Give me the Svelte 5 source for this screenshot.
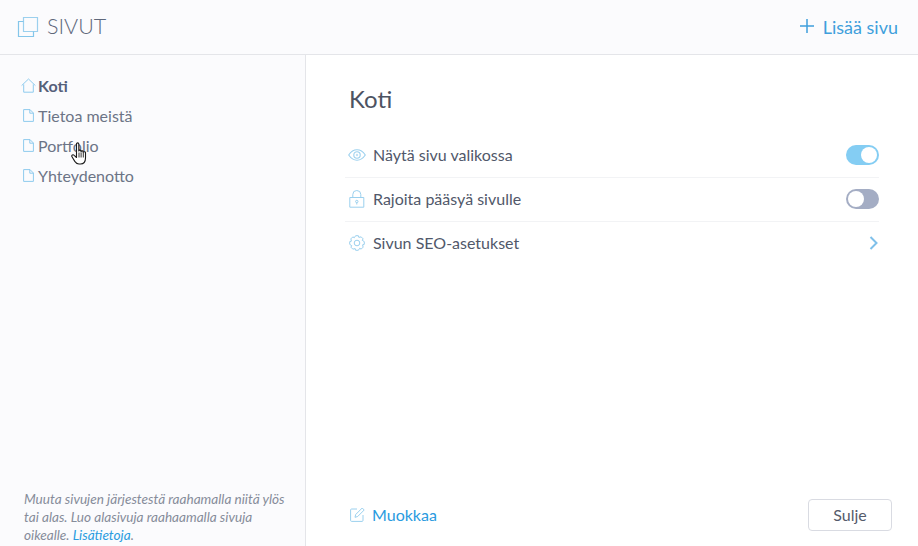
<script>
  const pages = [
    { name: 'Koti', home: true },
    { name: 'Tietoa meistä' },
    { name: 'Portfolio' },
    { name: 'Yhteydenotto' }
  ];

  function gearPath(cx, cy, outer, inner, teeth) {
    const pts = [];
    const step = (Math.PI * 2) / teeth;
    for (let i = 0; i < teeth; i++) {
      const a = i * step - Math.PI / 2;
      for (const [off, r] of [[-0.3, outer], [0.3, outer], [0.5, inner]]) {
        const t = a + off * step * 0.8;
        pts.push((cx + r * Math.cos(t)).toFixed(2) + ' ' + (cy + r * Math.sin(t)).toFixed(2));
      }
    }
    return 'M' + pts.join('L') + 'Z';
  }
  const gear = gearPath(8, 8, 7.4, 5.9, 8);
</script>

<div class="app">
  <header class="top">
    <div class="brand">
      <svg class="pages-ic" width="22" height="22" viewBox="0 0 22 22" fill="none">
        <path d="M6.500 1.500h14v14h-14z" stroke="#9bd0ee" stroke-width="1.200" />
        <path d="M6.500 5.500h-5v15h15v-5" stroke="#84c6ea" stroke-width="1.200" />
      </svg>
      <span class="title">SIVUT</span>
    </div>
    <button class="add">
      <svg width="16" height="16" viewBox="0 0 16 16" fill="none">
        <path d="M8 1v14M1 8h14" stroke="#3f9fdc" stroke-width="1.500" />
      </svg>
      <span>Lisää sivu</span>
    </button>
  </header>

  <div class="body">
    <aside class="side">
      <nav class="nav">
        {#each pages as p}
          <div class="nav-row" class:active={p.home}>
            <span class="nav-ic">
              {#if p.home}
                <svg width="15" height="15" viewBox="0 0 15 15" fill="none">
                  <path d="M0.600 7.600 7.500 1l6.900 6.600M2.700 6.400v7.800h9.600V6.400" stroke="#8fcbee" stroke-width="1" />
                </svg>
              {:else}
                <svg width="11" height="13" viewBox="0 0 11 13" fill="none">
                  <path d="M.6.6h6.400l3.400 3.400v8.400H.6zM6.800.6v3.600h3.600" stroke="#8fcbee" stroke-width="1" />
                </svg>
              {/if}
            </span>
            <span>{p.name}</span>
          </div>
        {/each}
      </nav>
      <p class="hint">Muuta sivujen järjestestä raahamalla niitä ylös tai alas. Luo alasivuja raahaamalla sivuja oikealle. <span class="link">Lisätietoja</span>.</p>
    </aside>

    <main class="main">
      <h1>Koti</h1>
      <div class="rows">
        <div class="row">
          <svg class="row-ic" width="18" height="12" viewBox="0 0 18 12" fill="none">
            <path d="M.7 6C3 2.600 5.800.8 9 .8s6 1.800 8.300 5.200C15 9.400 12.200 11.200 9 11.200S3 9.400.7 6z" stroke="#9bd0ee" stroke-width="1.100" />
            <circle cx="9" cy="6" r="3.200" stroke="#9bd0ee" stroke-width="1.100" />
            <circle cx="9" cy="6" r="1.200" fill="#c3e2f4" />
          </svg>
          <span class="label">Näytä sivu valikossa</span>
          <span class="switch on"><span class="knob"></span></span>
        </div>
        <div class="row">
          <svg class="row-ic" width="16" height="18" viewBox="0 0 16 18" fill="none">
            <path d="M.8 7.500h14v9.700H.8zM3.800 7.500V4.500a4 4 0 0 1 8 0v3" stroke="#9bd0ee" />
            <circle cx="7.800" cy="11.500" r="1.200" stroke="#9bd0ee" />
            <path d="M7.800 12.700v1.800" stroke="#9bd0ee" />
          </svg>
          <span class="label">Rajoita pääsyä sivulle</span>
          <span class="switch"><span class="knob"></span></span>
        </div>
        <div class="row">
          <svg class="row-ic" width="16" height="16" viewBox="0 0 16 16" fill="none">
            <path d={gear} stroke="#9bd0ee" stroke-linejoin="round" />
            <circle cx="8" cy="8" r="2.800" stroke="#9bd0ee" />
          </svg>
          <span class="label">Sivun SEO-asetukset</span>
          <svg class="chev" width="9" height="14" viewBox="0 0 9 14" fill="none">
            <path d="M1.500 1 7.500 7l-6 6" stroke="#7fc0ea" stroke-width="2" />
          </svg>
        </div>
      </div>

      <footer class="foot">
        <button class="edit">
          <svg width="15" height="15" viewBox="0 0 15 15" fill="none">
            <path d="M7 2H1.500A1 1 0 0 0 .6 3v10.400a1 1 0 0 0 1 1H12a1 1 0 0 0 1-1V8" stroke="#9bd0ee" />
            <path d="M5 10.300 5.700 7.500 12.200 1l2 2-6.500 6.500z" stroke="#9bd0ee" />
          </svg>
          <span>Muokkaa</span>
        </button>
        <button class="close">Sulje</button>
      </footer>
    </main>
  </div>

  <svg class="cursor" width="18" height="24" viewBox="0 0 18 24">
    <path d="M5.500 2c0-1.500 2.300-1.500 2.300 0v7c0-1.200 2.200-1.200 2.200 0v.8c0-1.200 2.200-1.200 2.200 0v.8c0-1.200 2.300-1.200 2.300 0v5.400c0 3-1.500 6-5 6H8c-2.200 0-3.300-1.200-4.200-2.600L1 14.800c-.9-1.500 1-2.800 2.200-1.500l2.300 2.200z" fill="#fff" stroke="#1c1c1c" stroke-width="1.100" stroke-linejoin="round" />
    <path d="M8 10.500v5M10.100 10.500v5M12.300 11v4.500" stroke="#1c1c1c" stroke-width=".9" />
  </svg>
</div>

<style>
  :global(body) {
    margin: 0;
    background: #fff;
  }
  .app {
    position: relative;
    width: 918px;
    height: 546px;
    overflow: hidden;
    display: flex;
    flex-direction: column;
    font-family: Lato, "Open Sans", sans-serif;
    color: #4f5668;
  }
  .top {
    height: 54px;
    flex: none;
    display: flex;
    align-items: center;
    justify-content: space-between;
    padding: 0 20px 0 17px;
    background: #fbfbfd;
    border-bottom: 1px solid #e4e5e9;
  }
  .brand {
    display: flex;
    align-items: center;
    gap: 8px;
  }
  .pages-ic {
    display: block;
  }
  .title {
    font-size: 21.500px;
    font-weight: 300;
    color: #5f687b;
    margin-top: -2px;
  }
  button {
    font: inherit;
    background: none;
    border: 0;
    padding: 0;
  }
  .add {
    display: flex;
    align-items: center;
    gap: 8px;
    font-size: 18px;
    color: #3f9fdc;
    margin-top: -1px;
  }
  .add svg {
    margin-top: -1px;
  }
  .body {
    flex: 1;
    display: flex;
    min-height: 0;
  }
  .side {
    width: 305px;
    flex: none;
    background: #fbfbfd;
    border-right: 1px solid #e4e5e9;
    display: flex;
    flex-direction: column;
    justify-content: space-between;
  }
  .nav {
    padding: 15px 0 0 19px;
  }
  .nav-row {
    height: 30px;
    display: flex;
    align-items: center;
    font-size: 16px;
    color: #6c7486;
  }
  .nav-row.active {
    font-weight: 700;
    color: #55607a;
  }
  .nav-ic {
    width: 19px;
    display: flex;
    justify-content: center;
  }
  .hint {
    margin: 0;
    padding: 0 14px 2px 24px;
    font-size: 13.600px;
    line-height: 18px;
    font-style: italic;
    color: #868c9a;
  }
  .link {
    color: #2a9be0;
  }
  .main {
    flex: 1;
    min-width: 0;
    display: flex;
    flex-direction: column;
    padding: 0 26px 0 39px;
  }
  h1 {
    margin: 28px 0 0 4px;
    font-size: 24px;
    line-height: 32px;
    font-weight: 400;
    color: #4d5362;
  }
  .rows {
    margin-top: 19px;
    padding-right: 13px;
  }
  .row {
    height: 44px;
    display: flex;
    align-items: center;
    box-sizing: border-box;
    border-bottom: 1px solid #f2f3f5;
    padding-bottom: 2px;
    font-size: 16px;
    color: #51586a;
  }
  .row:last-child {
    border-bottom-color: transparent;
  }
  .row-ic {
    flex: none;
    margin-left: 3px;
    width: 18px;
  }
  .label {
    flex: 1;
    margin-left: 7px;
  }
  .switch {
    width: 33px;
    height: 20px;
    border-radius: 10px;
    background: #a4adc4;
    position: relative;
    flex: none;
  }
  .switch.on {
    background: #84cdf3;
  }
  .knob {
    position: absolute;
    top: 2px;
    left: 2px;
    width: 16px;
    height: 16px;
    border-radius: 50%;
    background: #fff;
  }
  .on .knob {
    left: 15px;
  }
  .chev {
    margin-right: 1px;
  }
  .foot {
    margin-top: auto;
    height: 47px;
    padding-bottom: 8px;
    display: flex;
    align-items: center;
    justify-content: space-between;
  }
  .edit {
    display: flex;
    align-items: center;
    gap: 7px;
    margin-left: 5px;
    font-size: 16px;
    color: #2a9be0;
  }
  .close {
    width: 84px;
    height: 32px;
    box-sizing: border-box;
    border: 1px solid #d9dbe2;
    border-radius: 4px;
    background: #fff;
    font-size: 16px;
    color: #555b6b;
  }
  .cursor {
    position: absolute;
    left: 71px;
    top: 142px;
  }
</style>
